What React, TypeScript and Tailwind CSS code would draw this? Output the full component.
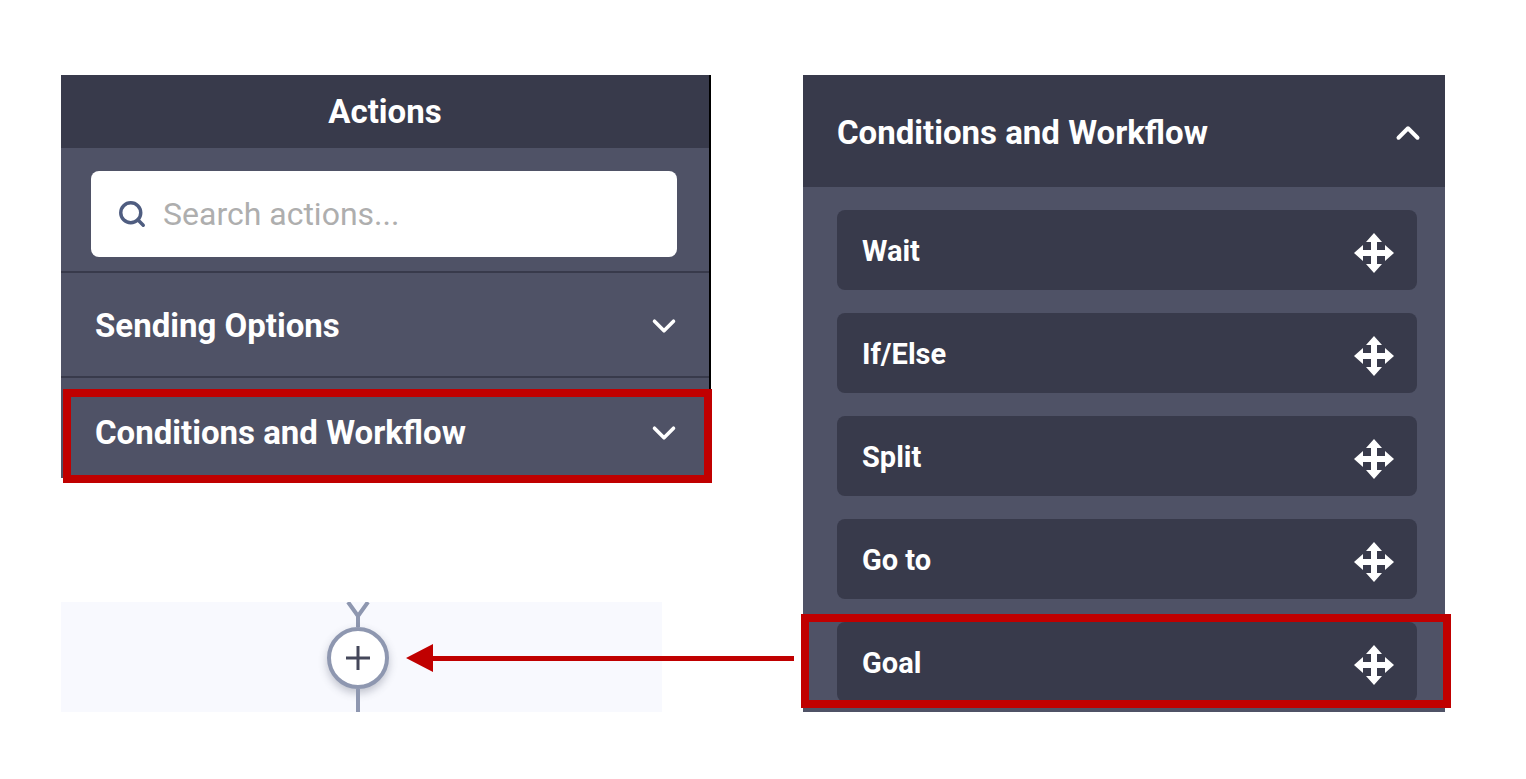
import { ChevronDown, ChevronUp, Search } from 'lucide-react';

const FONT = "font-['Roboto','Liberation_Sans',sans-serif]";
const ITEMS = ['Wait', 'If/Else', 'Split', 'Go to', 'Goal'];

function MoveIcon() {
    return (
        <svg className="w-[42px] h-[42px] mt-[5px] text-white" viewBox="0 0 42 42" fill="currentColor">
            <path d="M21 1l8 9h-5v8h8v-5l9 8-9 8v-5h-8v8h5l-8 9-8-9h5v-8h-8v5l-9-8 9-8v5h8v-8h-5z" />
        </svg>
    );
}

function AccordionRow({ label, height }: { label: string; height: string }) {
    return (
        <div className={`flex items-center justify-between pl-[34px] pr-[26px] ${height}`}>
            <span className="text-[33px] font-bold text-white">{label}</span>
            <ChevronDown className="w-[38px] h-[38px] text-white" strokeWidth={2.25} />
        </div>
    );
}

function ActionsPanel() {
    return (
        <div className="relative h-[403px] bg-[#4f5266] border-r-2 border-black">
            <div className="h-[73px] bg-[#383a4b] flex items-center justify-center text-[33px] font-bold text-white">
                Actions
            </div>
            <div className="h-[125px] pt-[23px] px-[30px] pr-[32px] border-b-2 border-[#383a4b]">
                <div className="h-[86px] bg-white rounded-[8px] flex items-center gap-[16px] pl-[26px]">
                    <Search className="w-[30px] h-[30px] text-[#4f5d80]" strokeWidth={2.75} />
                    <span className="text-[32px] text-[#aeaeae]">Search actions...</span>
                </div>
            </div>
            <AccordionRow label="Sending Options" height="h-[105px] pt-[2px] border-b-2 border-[#383a4b]" />
            <AccordionRow label="Conditions and Workflow" height="h-[98px] pt-[12px]" />
            <div className="absolute left-[2px] right-[-3px] top-[314px] h-[94px] border-[8px] border-[#c00000]" />
        </div>
    );
}

function FlowCanvas() {
    return (
        <div className="w-[601px] h-[110px] mt-[124px] bg-[#f8f9fe] flex flex-col pl-[266px]">
            <svg className="w-[62px] h-[25px] text-[#8e97b0]" viewBox="0 0 62 25" fill="none" stroke="currentColor" strokeWidth={4}>
                <path d="M21 0l10 14 10-14M31 14v11" />
            </svg>
            <div className="w-[62px] h-[62px] shrink-0 rounded-full bg-white border-4 border-[#8e97b0] shadow-[0_4px_8px_rgba(60,65,90,0.3)] flex items-center justify-center">
                <svg className="w-[28px] h-[28px] text-[#44475a]" viewBox="0 0 28 28" fill="none" stroke="currentColor" strokeWidth={3}>
                    <path d="M14 2v24M2 14h24" />
                </svg>
            </div>
            <div className="ml-[29px] w-[4px] flex-1 bg-[#8e97b0]" />
        </div>
    );
}

function WorkflowPanel() {
    return (
        <div className="relative w-[642px] h-[637px] bg-[#4f5266]">
            <div className="h-[112px] bg-[#383a4b] flex items-center justify-between pl-[34px] pr-[18px] pt-[3px] text-[33px] font-bold text-white">
                <span>Conditions and Workflow</span>
                <ChevronUp className="w-[38px] h-[38px]" strokeWidth={2.5} />
            </div>
            <div className="flex flex-col gap-[23px] pt-[23px] pl-[34px] pr-[28px]">
                {ITEMS.map((item) => (
                    <div key={item} className="h-[80px] bg-[#383a4b] rounded-[8px] flex items-center justify-between pl-[25px] pr-[22px]">
                        <span className="text-[29px] font-bold text-white pt-[3px]">{item}</span>
                        <MoveIcon />
                    </div>
                ))}
            </div>
            <div className="absolute left-[-2px] right-[-6px] top-[539px] h-[94px] border-[8px] border-[#c00000]" />
        </div>
    );
}

export default function App() {
    return (
        <div className={`relative w-[1526px] h-[779px] bg-white flex gap-[92px] pl-[61px] pt-[75px] overflow-hidden ${FONT}`}>
            <div className="w-[650px] flex flex-col">
                <ActionsPanel />
                <FlowCanvas />
            </div>
            <WorkflowPanel />
            <svg className="absolute left-[406px] top-[644px] w-[388px] h-[28px]" viewBox="0 0 388 28" fill="#c00000">
                <path d="M0 14L27 0v12h361v5H27v11z" />
            </svg>
        </div>
    );
}
